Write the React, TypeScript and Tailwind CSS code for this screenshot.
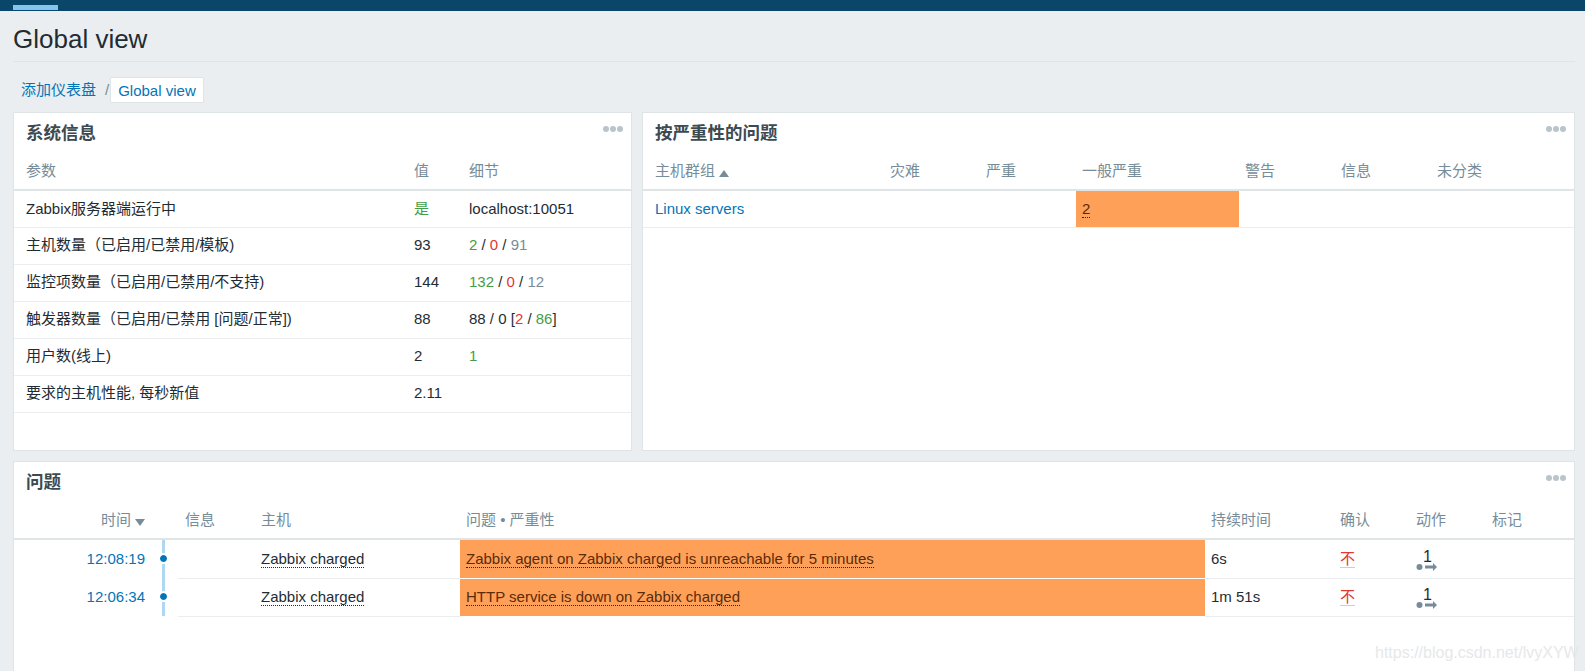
import React from "react";

const FONT = "font-['Liberation_Sans','Noto_Sans_CJK_SC',sans-serif]";

function WidgetMenu() {
  return (
    <div className="absolute right-[8px] top-[13px] flex gap-[1px]">
      <span className="w-[6px] h-[6px] rounded-full bg-[#b9c4cb]" />
      <span className="w-[6px] h-[6px] rounded-full bg-[#b9c4cb]" />
      <span className="w-[6px] h-[6px] rounded-full bg-[#b9c4cb]" />
    </div>
  );
}

function Widget({ title, className, children }: { title: string; className: string; children: React.ReactNode }) {
  return (
    <section className={`relative bg-white border border-[#dfe4e7] ${className}`}>
      <WidgetMenu />
      <h2 className="h-[40px] pl-[12px] pt-[9px] text-[17.5px] leading-[22px] font-bold text-[#3c4a52]">{title}</h2>
      {children}
    </section>
  );
}

function Th({ className = "", children }: { className?: string; children?: React.ReactNode }) {
  return (
    <th className={`h-[37px] p-0 pl-[12px] text-left font-normal text-[#768d99] border-b-[2px] border-[#dfe4e7] ${className}`}>
      {children}
    </th>
  );
}

function Td({ className = "", children }: { className?: string; children?: React.ReactNode }) {
  return <td className={`h-[37px] p-0 pl-[12px] border-b border-[#ebeef0] ${className}`}>{children}</td>;
}

function SortArrow({ up }: { up?: boolean }) {
  return (
    <svg className="inline-block ml-[4px] align-[-1px]" width="10" height="7" viewBox="0 0 10 7">
      <path d={up ? "M5 0l5 7H0z" : "M0 0h10L5 7z"} fill="#768d99" />
    </svg>
  );
}

const Green = ({ children }: { children: React.ReactNode }) => <span className="text-[#429e47]">{children}</span>;
const Red = ({ children }: { children: React.ReactNode }) => <span className="text-[#e33734]">{children}</span>;
const Grey = ({ children }: { children: React.ReactNode }) => <span className="text-[#768d99]">{children}</span>;

const systemRows: { name: string; value: React.ReactNode; detail?: React.ReactNode }[] = [
  { name: "Zabbix服务器端运行中", value: <Green>是</Green>, detail: "localhost:10051" },
  { name: "主机数量（已启用/已禁用/模板)", value: "93", detail: <><Green>2</Green> / <Red>0</Red> / <Grey>91</Grey></> },
  { name: "监控项数量（已启用/已禁用/不支持)", value: "144", detail: <><Green>132</Green> / <Red>0</Red> / <Grey>12</Grey></> },
  { name: "触发器数量（已启用/已禁用 [问题/正常])", value: "88", detail: <>88 / 0 [<Red>2</Red> / <Green>86</Green>]</> },
  { name: "用户数(线上)", value: "2", detail: <Green>1</Green> },
  { name: "要求的主机性能, 每秒新值", value: "2.11" },
];

const problems = [
  { time: "12:08:19", text: "Zabbix agent on Zabbix charged is unreachable for 5 minutes", duration: "6s" },
  { time: "12:06:34", text: "HTTP service is down on Zabbix charged", duration: "1m 51s" },
];

function ActionIcon() {
  return (
    <span className="relative inline-block w-[22px] h-[26px] align-middle">
      <span className="absolute left-[7px] top-[3px] text-[16px] leading-[16px] text-[#1f2c33]">1</span>
      <svg className="absolute left-0 top-[16px]" width="22" height="10" viewBox="0 0 22 10">
        <circle cx="3.5" cy="5" r="3" fill="#768d99" />
        <path d="M9 3.5h8V1l4 4-4 4V6.5H9z" fill="#768d99" />
      </svg>
    </span>
  );
}

export default function App() {
  return (
    <div className={`relative h-[671px] overflow-hidden bg-[#ebeef0] text-[15px] text-[#1f2c33] ${FONT}`}>
      <header className="h-[11px] bg-[#0a466a] pt-[5px] pl-[13px]">
        <div className="w-[45px] h-[5px] bg-[#84c5f0]" />
      </header>

      <div className="pl-[13px] w-[1575px]">
        <h1 className="h-[51px] pt-[12px] text-[26px] leading-[32px] font-normal border-b border-[#dfe4e7] text-[#1f2c33]">
          Global view
        </h1>

        <nav className="flex items-center h-[26px] mt-[15px] pl-[8px]">
          <a className="text-[#0275b8]">添加仪表盘</a>
          <span className="ml-[9px] mr-[1px] text-[#768d99]">/</span>
          <a className="h-[26px] px-[7px] leading-[25px] bg-white border border-[#dfe4e7] rounded-[2px] text-[#0275b8]">Global view</a>
        </nav>

        <div className="flex gap-[10px] mt-[9px]">
          <Widget title="系统信息" className="w-[619px] h-[339px]">
            <table className="w-full table-fixed border-collapse">
              <thead>
                <tr>
                  <Th className="w-[388px]">参数</Th>
                  <Th className="w-[55px]">值</Th>
                  <Th>细节</Th>
                </tr>
              </thead>
              <tbody>
                {systemRows.map((row) => (
                  <tr key={row.name}>
                    <Td>{row.name}</Td>
                    <Td>{row.value}</Td>
                    <Td>{row.detail}</Td>
                  </tr>
                ))}
              </tbody>
            </table>
          </Widget>

          <Widget title="按严重性的问题" className="flex-1 h-[339px]">
            <table className="w-full table-fixed border-collapse">
              <thead>
                <tr>
                  <Th className="w-[235px]">
                    主机群组
                    <SortArrow up />
                  </Th>
                  <Th className="w-[96px]">灾难</Th>
                  <Th className="w-[102px]">严重</Th>
                  <Th className="w-[163px] !pl-[6px]">一般严重</Th>
                  <Th className="w-[96px] !pl-[6px]">警告</Th>
                  <Th className="w-[96px] !pl-[6px]">信息</Th>
                  <Th className="!pl-[6px]">未分类</Th>
                </tr>
              </thead>
              <tbody>
                <tr>
                  <Td className="text-[#0275b8]">Linux servers</Td>
                  <Td />
                  <Td />
                  <Td className="!pl-[6px] bg-[#ffa059]">
                    <span className="border-b border-dotted border-[#1f2c33] text-[#5b2b06]">2</span>
                  </Td>
                  <Td />
                  <Td />
                  <Td />
                </tr>
              </tbody>
            </table>
          </Widget>
        </div>

        <Widget title="问题" className="mt-[10px] h-[261px]">
          <table className="w-full table-fixed border-collapse">
            <thead>
              <tr>
                <Th className="w-[131px] !pl-0 !pr-0 text-right">
                  时间
                  <SortArrow />
                </Th>
                <Th className="w-[33px]" />
                <Th className="w-[77px] !pl-[7px]">信息</Th>
                <Th className="w-[205px] !pl-[6px]">主机</Th>
                <Th className="w-[745px] !pl-[6px]">问题 • 严重性</Th>
                <Th className="w-[129px] !pl-[6px]">持续时间</Th>
                <Th className="w-[76px] !pl-[6px]">确认</Th>
                <Th className="w-[76px] !pl-[6px]">动作</Th>
                <Th className="!pl-[6px]">标记</Th>
              </tr>
            </thead>
            <tbody>
              {problems.map((p) => (
                <tr key={p.time}>
                  <td className="h-[38px] p-0 text-right text-[#0275b8]">{p.time}</td>
                  <td className="h-[38px] p-0 pl-[17px]">
                    <div className="relative w-[3px] h-[38px] bg-[#aed7f1]">
                      <span className="absolute left-[-2px] top-[15px] w-[7px] h-[7px] rounded-full bg-[#0275b8] outline-[2px] outline-white" />
                    </div>
                  </td>
                  <Td className="!pl-[6px]" />
                  <Td className="!pl-[6px]">
                    <span className="border-b border-dotted border-[#1f2c33]">Zabbix charged</span>
                  </Td>
                  <Td className="!pl-[6px] bg-[#ffa059] border-white">
                    <span className="border-b border-dotted border-[#1f2c33] text-[#5b2b06]">{p.text}</span>
                  </Td>
                  <Td className="!pl-[6px]">{p.duration}</Td>
                  <Td className="!pl-[6px]">
                    <span className="border-b border-[#c8d0d5] text-[#e33734]">不</span>
                  </Td>
                  <Td className="!pl-[6px]">
                    <ActionIcon />
                  </Td>
                  <Td className="!pl-[6px]" />
                </tr>
              ))}
            </tbody>
          </table>
        </Widget>
      </div>

      <span className="absolute left-[1375px] top-[643px] text-[16px] leading-[20px] text-[#e6e8ea] whitespace-nowrap">
        https://blog.csdn.net/lvyXYW
      </span>
    </div>
  );
}
